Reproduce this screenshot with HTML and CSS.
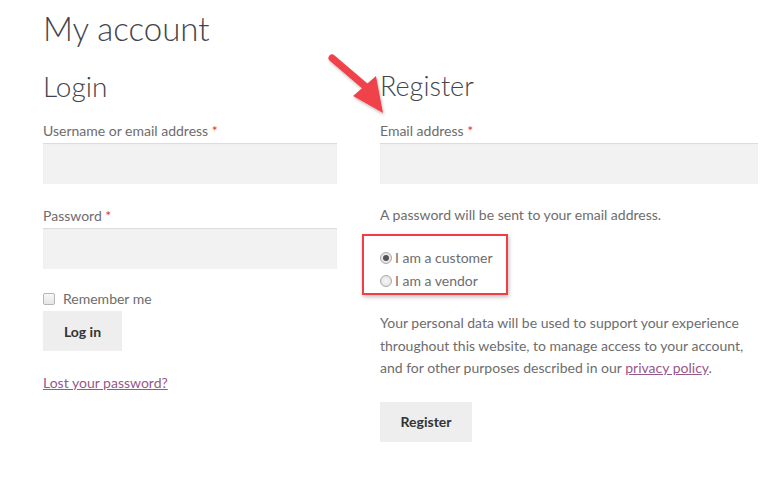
FILE: index.html
```html
<!DOCTYPE html>
<html lang="en">
<head>
    <meta charset="UTF-8">
    <title>My account</title>
    <link rel="stylesheet" href="styles.css">
</head>
<body>
    <div class="page">
        <h1>My account</h1>

        <div class="columns">
            <div class="col col-login">
                <h2>Login</h2>
                <label class="field-label">Username or email address <span class="req">*</span></label>
                <div class="input"></div>

                <label class="field-label">Password <span class="req">*</span></label>
                <div class="input input-last"></div>

                <div class="remember">
                    <span class="checkbox"></span>
                    <span>Remember me</span>
                </div>
                <button class="btn">Log in</button>

                <a class="lost" href="#">Lost your password?</a>
            </div>

            <div class="col col-register">
                <h2>Register</h2>
                <label class="field-label">Email address <span class="req">*</span></label>
                <div class="input"></div>

                <p class="note">A password will be sent to your email address.</p>

                <div class="roles">
                    <div class="role"><span class="radio checked"></span>I am a customer</div>
                    <div class="role"><span class="radio"></span>I am a vendor</div>
                </div>

                <p class="privacy">Your personal data will be used to support your experience throughout this website, to manage access to your account, and for other purposes described in our <a href="#">privacy policy</a>.</p>

                <button class="btn">Register</button>
            </div>
        </div>

        <!-- red annotation arrow -->
        <svg class="arrow" width="70" height="70" viewBox="0 0 70 70">
            <defs>
                <filter id="sh" x="-20%" y="-20%" width="150%" height="150%">
                    <feDropShadow dx="1" dy="2" stdDeviation="1.5" flood-color="#000" flood-opacity="0.25"/>
                </filter>
            </defs>
            <g filter="url(#sh)" fill="#f0434b">
                <path d="M6 4 L40 33" stroke="#f0434b" stroke-width="7" stroke-linecap="round"/>
                <polygon points="27,42 50,22 57,59"/>
            </g>
        </svg>
    </div>
</body>
</html>
```

FILE: styles.css
```css
body {
    margin: 0;
    background: #fff;
    font-family: Lato, "Open Sans", sans-serif;
    color: #6d6d6d;
    font-size: 14px;
}

.page {
    position: relative;
    padding: 0 10px 0 43px;
    width: 768px;
    box-sizing: border-box;
}

h1 {
    margin: 0;
    padding-top: 6px;
    font-size: 33px;
    font-weight: 300;
    color: #43454b;
    line-height: 44px;
}

h2 {
    margin: 18px 0 17px;
    font-size: 28px;
    font-weight: 300;
    color: #43454b;
    line-height: 36px;
}

.col-register h2 {
    font-size: 27px;
}

.columns {
    display: flex;
    gap: 43px;
}

.col-login {
    width: 294px;
}

.col-register {
    width: 378px;
}

.field-label {
    display: block;
    line-height: 20px;
    margin-bottom: 2px;
}

.req {
    color: #e2401c;
}

.input {
    height: 41px;
    background: #f2f2f2;
    box-shadow: inset 0 1px 1px rgba(0, 0, 0, 0.1);
    margin-bottom: 22px;
}

.input-last {
    margin-bottom: 20px;
}

.remember {
    display: flex;
    align-items: center;
    gap: 8px;
    line-height: 20px;
}

.checkbox {
    width: 10px;
    height: 10px;
    border: 1px solid #b5b5b5;
    border-radius: 2px;
    background: linear-gradient(#f7f7f7, #e6e6e6);
}

.btn {
    display: block;
    font-family: inherit;
    font-size: 14px;
    font-weight: 700;
    color: #333;
    background: #eee;
    border: none;
    padding: 0;
    height: 40px;
    margin-top: 2px;
}

.col-login .btn {
    width: 79px;
}

.col-register .btn {
    width: 92px;
}

.lost {
    display: inline-block;
    margin-top: 23px;
    color: #96588a;
    text-decoration: underline;
}

.note {
    margin: -1px 0 0;
    line-height: 20px;
}

.roles {
    box-sizing: border-box;
    margin: 9px 0 0 -18px;
    width: 146px;
    height: 61px;
    border: 2px solid #ee3f47;
    box-shadow: 1px 2px 4px rgba(0, 0, 0, 0.25);
    padding: 12px 0 0 16px;
    display: flex;
    flex-direction: column;
    gap: 3px;
}

.role {
    display: flex;
    align-items: center;
    line-height: 20px;
}

.radio {
    width: 10px;
    height: 10px;
    border: 1px solid #a9a9a9;
    border-radius: 50%;
    background: radial-gradient(#f8f8f8, #dcdcdc);
    margin-right: 3px;
    position: relative;
}

.radio.checked::after {
    content: "";
    position: absolute;
    left: 2px;
    top: 2px;
    width: 6px;
    height: 6px;
    border-radius: 50%;
    background: #555;
}

.privacy {
    margin: 17px 0 22px;
    line-height: 22.5px;
}

.privacy a {
    color: #96588a;
}

.arrow {
    position: absolute;
    left: 326px;
    top: 54px;
}
```
